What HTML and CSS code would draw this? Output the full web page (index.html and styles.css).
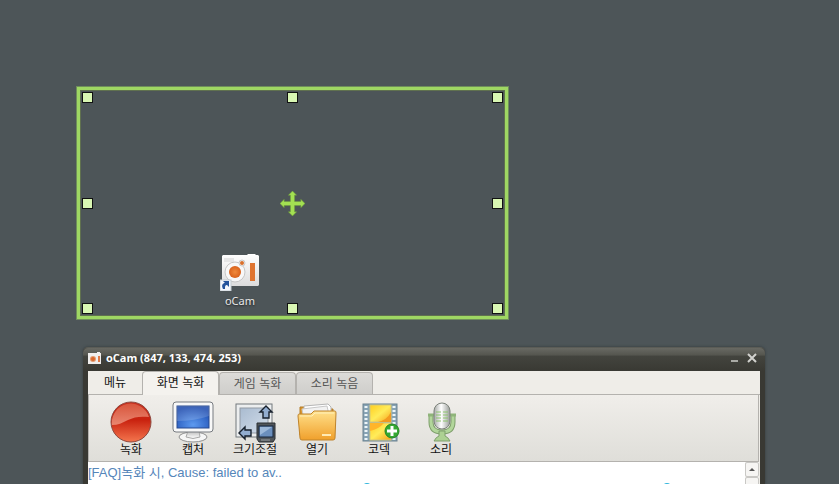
FILE: index.html
```html
<!DOCTYPE html>
<html lang="ko">
<head>
    <meta charset="UTF-8">
    <title>oCam</title>
    <meta name="viewport" content="width=device-width, initial-scale=1.0">
    <link rel="stylesheet" href="styles.css">
</head>
<body>
    <main class="desktop">
        <a class="shortcut" href="#ocam">
            <svg class="shortcut-icon" width="40" height="40" viewBox="0 0 40 40" aria-hidden="true">
                <defs>
                    <linearGradient id="camBody" x1="0" y1="0" x2="0" y2="1">
                        <stop offset="0" stop-color="#ffffff"/>
                        <stop offset="1" stop-color="#dcdcdc"/>
                    </linearGradient>
                    <radialGradient id="camLens">
                        <stop offset="0" stop-color="#f08a3c"/>
                        <stop offset="1" stop-color="#d9621c"/>
                    </radialGradient>
                </defs>
                <path d="M3 4h24l1-1h7l1 1h2l1 1v29l-1 1H3l-1-1V5z" fill="url(#camBody)"/>
                <rect x="4" y="7" width="10" height="4" fill="#e6e6e6"/>
                <circle cx="15" cy="21" r="10" fill="#f8f8f8" stroke="#c6c6c6"/>
                <circle cx="15" cy="21" r="6" fill="url(#camLens)"/>
                <circle cx="22" cy="12" r="3" fill="#f4f4f4" stroke="#cccccc"/>
                <circle cx="22" cy="12" r="2" fill="#d9702c"/>
                <rect x="30" y="12" width="5" height="18" fill="#df7430"/>
                <rect x="0" y="29" width="11" height="11" fill="#f4f8fc" stroke="#c4ccd2"/>
                <path d="M3 38c-2-4 0-6 2-6l-2-2h6v6l-2-2c-2 0-2 1-2 4z" fill="#24549c"/>
            </svg>
            <span>oCam</span>
        </a>

        <div class="region">
            <i class="handle"></i><i class="handle"></i><i class="handle"></i>
            <i class="handle"></i>
            <svg class="move" width="25" height="25" viewBox="0 0 24 24" aria-hidden="true">
                <path d="M12 0l4 4h-2v6h6V8l4 4-4 4v-2h-6v6h2l-4 4-4-4h2v-6H4v2l-4-4 4-4v2h6V4H8z" fill="#a3e052" stroke="#6d9a3c" stroke-width=".5"/>
            </svg>
            <i class="handle"></i>
            <i class="handle"></i><i class="handle"></i><i class="handle"></i>
        </div>

        <section class="window" id="ocam">
            <header class="titlebar">
                <svg width="13" height="12" viewBox="0 0 13 12" aria-hidden="true">
                    <path d="M0 1h9V0h3v1h1v11H0z" fill="#f0eeec"/>
                    <circle cx="5" cy="7" r="3" fill="#e49a70"/>
                    <circle cx="5" cy="7" r="2" fill="#d9682c"/>
                    <rect x="10" y="4" width="2" height="6" fill="#df7a48"/>
                </svg>
                <h1>oCam (847, 133, 474, 253)</h1>
                <button class="win-btn" aria-label="최소화">
                    <svg width="10" height="10" viewBox="0 0 10 10"><path d="M1 8h7" stroke="#a9aaa5" stroke-width="2"/></svg>
                </button>
                <button class="win-btn" aria-label="닫기">
                    <svg width="10" height="10" viewBox="0 0 10 10"><path d="M1 1l8 8M9 1L1 9" stroke="#d2d2ce" stroke-width="2"/></svg>
                </button>
            </header>

            <div class="client">
                <nav class="tabs">
                    <button class="menu">메뉴</button>
                    <button class="tab active">화면 녹화</button>
                    <button class="tab">게임 녹화</button>
                    <button class="tab">소리 녹음</button>
                </nav>

                <div class="toolbar">
                    <button class="tool">
                        <svg width="42" height="42" viewBox="0 0 42 42" aria-hidden="true">
                            <defs>
                                <linearGradient id="recBase" x1="0" y1="0" x2="0" y2="1">
                                    <stop offset="0" stop-color="#c83020"/>
                                    <stop offset=".45" stop-color="#c9220f"/>
                                    <stop offset="1" stop-color="#f4764e"/>
                                </linearGradient>
                                <linearGradient id="recShine" x1="0" y1="0" x2="0" y2="1">
                                    <stop offset="0" stop-color="#d8553c"/>
                                    <stop offset="1" stop-color="#e98670"/>
                                </linearGradient>
                            </defs>
                            <circle cx="21" cy="21" r="20" fill="url(#recBase)" stroke="#8e4a40"/>
                            <path d="M2 24a19 19 0 0 1 37-8c-9-1-15 0-21 3-6 3-10 5-16 5z" fill="url(#recShine)"/>
                        </svg>
                        <span>녹화</span>
                    </button>
                    <button class="tool">
                        <svg width="42" height="42" viewBox="0 0 42 42" aria-hidden="true">
                            <defs>
                                <radialGradient id="screen" cx=".5" cy=".85" r=".8">
                                    <stop offset="0" stop-color="#5d9af0"/>
                                    <stop offset="1" stop-color="#1746ac"/>
                                </radialGradient>
                                <linearGradient id="stand" x1="0" y1="0" x2="0" y2="1">
                                    <stop offset="0" stop-color="#b8b8b8"/>
                                    <stop offset="1" stop-color="#ffffff"/>
                                </linearGradient>
                            </defs>
                            <ellipse cx="21" cy="36" rx="14" ry="5" fill="#f6f6f6" stroke="#909090"/>
                            <path d="M16 30h11l1 6q-7 3-14 0z" fill="url(#stand)" stroke="#a8a8a8"/>
                            <rect x="1" y="1" width="40" height="30" rx="3" fill="#f8f8f8" stroke="#777b80"/>
                            <rect x="5" y="5" width="32" height="22" fill="url(#screen)" stroke="#284a90"/>
                            <path d="M5 5h32v10q-14 5-32 5z" fill="#ffffff" opacity=".16"/>
                        </svg>
                        <span>캡처</span>
                    </button>
                    <button class="tool">
                        <svg width="42" height="42" viewBox="0 0 42 42" aria-hidden="true">
                            <defs>
                                <linearGradient id="pane" x1="0" y1="0" x2="1" y2="1">
                                    <stop offset="0" stop-color="#a9bbd0"/>
                                    <stop offset="1" stop-color="#d3deeb"/>
                                </linearGradient>
                            </defs>
                            <rect x="2" y="3" width="36" height="33" fill="#eceeef" stroke="#73787d"/>
                            <rect x="6" y="7" width="28" height="25" fill="url(#pane)" stroke="#929aa4"/>
                            <path d="M32 5l6 6h-3v6h-6v-6h-3z" fill="#92add0" stroke="#17202c" stroke-width="1.4"/>
                            <path d="M5 32l6-6v3h6v6h-6v3z" fill="#92add0" stroke="#17202c" stroke-width="1.4"/>
                            <path d="M23 22h18v16l-2 3H25l-2-3z" fill="#51565a" stroke="#2b2f32"/>
                            <rect x="25" y="25" width="14" height="11" fill="#6b8fbd" stroke="#17243a"/>
                            <path d="M26 26h12l-12 8z" fill="#9cb8d9"/>
                            <path d="M27 39h9" stroke="#999da0"/>
                        </svg>
                        <span>크기조절</span>
                    </button>
                    <button class="tool">
                        <svg width="42" height="42" viewBox="0 0 42 42" aria-hidden="true">
                            <defs>
                                <linearGradient id="folder" x1="0" y1="0" x2="0" y2="1">
                                    <stop offset="0" stop-color="#ffe08a"/>
                                    <stop offset="1" stop-color="#f0a02c"/>
                                </linearGradient>
                            </defs>
                            <path d="M4 6h10l2 2h21v26H4z" fill="#dc962c" stroke="#b27a26"/>
                            <path d="M8 5l24-2 3 3v10H8z" fill="#ffffff" stroke="#b5b5b5"/>
                            <path d="M6 8l25-3 2 9H7z" fill="#f2f2f2" stroke="#c8c8c8"/>
                            <path d="M3 13h12l3-3h21q1 0 1 2l-1 25q0 2-2 2H6q-2 0-2-2L2 15q0-2 1-2z" fill="url(#folder)" stroke="#bf842c"/>
                            <path d="M4 15h12l3-3h19" fill="none" stroke="#fff0ba"/>
                            <path d="M26 34h9" stroke="#ffeab4" stroke-width="2"/>
                        </svg>
                        <span>열기</span>
                    </button>
                    <button class="tool">
                        <svg width="42" height="42" viewBox="0 0 42 42" aria-hidden="true">
                            <defs>
                                <linearGradient id="frame" x1="0" y1="0" x2="1" y2="1">
                                    <stop offset="0" stop-color="#ffce1f"/>
                                    <stop offset=".5" stop-color="#ffec5a"/>
                                    <stop offset="1" stop-color="#f6a11a"/>
                                </linearGradient>
                            </defs>
                            <rect x="5" y="3" width="34" height="37" fill="#87a3b4" stroke="#6b8290"/>
                            <path d="M8 5v34M36 5v34" stroke="#edf5f8" stroke-width="3" stroke-dasharray="2 2"/>
                            <rect x="12" y="4" width="21" height="17" fill="url(#frame)" stroke="#d5c77a"/>
                            <rect x="12" y="22" width="21" height="17" fill="url(#frame)" stroke="#d5c77a"/>
                            <path d="M33 11v10H20q9-2 13-10z" fill="#f39a20"/>
                            <path d="M12 22h14q-5 6-14 8z" fill="#ffb52a"/>
                            <circle cx="34" cy="30" r="7" fill="#35a832" stroke="#238723"/>
                            <path d="M34 25v10M29 30h10" stroke="#ffffff" stroke-width="3"/>
                        </svg>
                        <span>코덱</span>
                    </button>
                    <button class="tool">
                        <svg width="42" height="42" viewBox="0 0 42 42" aria-hidden="true">
                            <defs>
                                <linearGradient id="mic" x1="0" y1="0" x2="1" y2="0">
                                    <stop offset="0" stop-color="#a5a8a5"/>
                                    <stop offset=".45" stop-color="#ffffff"/>
                                    <stop offset="1" stop-color="#999d99"/>
                                </linearGradient>
                            </defs>
                            <path d="M11 14v7q0 10 11 10t11-10v-7" fill="none" stroke="#7f9f6c" stroke-width="5"/>
                            <path d="M11 14v7q0 10 11 10t11-10v-7" fill="none" stroke="#b2d69b" stroke-width="3"/>
                            <path d="M8 14h6M30 14h6" stroke="#8fb47a" stroke-width="3"/>
                            <path d="M19 30h6v5q3 1 5 5H14q2-4 5-5z" fill="#add192" stroke="#7f9f6c"/>
                            <rect x="14" y="2" width="16" height="26" rx="8" fill="url(#mic)" stroke="#7c827a"/>
                            <path d="M16 11h5M23 11h5M16 14h5M23 14h5M16 17h5M23 17h5M16 20h5M23 20h5" stroke="#8cc36c"/>
                        </svg>
                        <span>소리</span>
                    </button>
                </div>

                <div class="news">
                    <div class="news-list">
                        <a href="#faq">[FAQ]녹화 시, Cause: failed to av..</a>
                        <div class="dots"><i></i><i></i></div>
                    </div>
                    <div class="scrollbar">
                        <button class="scroll-up" aria-label="위로">
                            <svg width="6" height="3" viewBox="0 0 6 3"><path d="M0 3l3-3 3 3z" fill="#555"/></svg>
                        </button>
                        <div class="thumb"></div>
                    </div>
                </div>
            </div>
        </section>
    </main>
</body>
</html>
```
FILE: styles.css
```css
* {
    box-sizing: border-box;
}
body {
    margin: 0;
    font-family: "Liberation Sans", "Noto Sans CJK KR", sans-serif;
    font-size: 12px;
    color: #111;
}
button {
    margin: 0;
    padding: 0;
    border: none;
    background: none;
    color: inherit;
    font: inherit;
    cursor: pointer;
}
svg {
    display: block;
}
.desktop {
    position: relative;
    height: 100vh;
    overflow: hidden;
    background: #4d5558;
}

/* desktop icon */
.shortcut {
    position: absolute;
    left: 210px;
    top: 251px;
    width: 60px;
    display: flex;
    flex-direction: column;
    align-items: center;
    gap: 2px;
    color: #e8e8e8;
    font-family: "Noto Sans", sans-serif;
    font-size: 11px;
    line-height: 16px;
    text-decoration: none;
    text-shadow: 0 1px 2px #222;
}

/* recording area */
.region {
    position: absolute;
    left: 76px;
    top: 86px;
    width: 433px;
    height: 234px;
    padding: 2px;
    border: 4px solid #9fd763;
    outline: 1px solid #6f8e5b;
    outline-offset: -1px;
    box-shadow: inset 0 0 0 1px #60714f;
    display: grid;
    grid-template-columns: repeat(3, 25px);
    grid-template-rows: 11px 25px 11px;
    justify-content: space-between;
    align-content: space-between;
    align-items: center;
    justify-items: center;
}
.handle {
    width: 11px;
    height: 11px;
    background: #d9f7b3;
    border: 1px solid #111;
}
.handle:nth-child(3n+1) {
    justify-self: start;
}
.handle:nth-child(3n) {
    justify-self: end;
}

/* main window */
.window {
    position: absolute;
    left: 83px;
    right: 74px;
    top: 347px;
    bottom: 0;
    padding: 0 5px;
    display: flex;
    flex-direction: column;
    background: #393933;
    border: 1px solid #5b5c56;
    border-width: 1px 0 0;
    border-radius: 5px 5px 0 0;
    box-shadow: 0 0 3px #33393b;
}
.titlebar {
    display: flex;
    align-items: center;
    gap: 5px;
    height: 23px;
    margin: 0 -5px;
    padding: 0 7px 3px 5px;
    border-radius: 5px 5px 0 0;
    background: linear-gradient(#686963, #55564f 30%, #43443e 36%, #393933);
}
.titlebar h1 {
    flex: 1;
    margin: 0;
    color: #fff;
    font: bold 11px/16px "Open Sans", "Noto Sans", sans-serif;
}
.win-btn {
    padding: 0 1px;
}
.client {
    flex: 1;
    min-height: 0;
    display: flex;
    flex-direction: column;
    background: #efede8;
}

.tabs {
    display: flex;
    align-items: flex-end;
    height: 24px;
    flex-shrink: 0;
    border-bottom: 1px solid #b4b2ae;
}
.menu {
    width: 54px;
    height: 23px;
    padding-bottom: 2px;
}
.tab {
    width: 77px;
    height: 22px;
    padding-bottom: 2px;
    border: 1px solid #b4b2ae;
    border-bottom: none;
    border-radius: 4px 4px 0 0;
    background: linear-gradient(#dcdbd8, #cfcecb);
    color: #555;
}
.tab.active {
    height: 24px;
    margin-bottom: -1px;
    padding-bottom: 4px;
    background: #f4f2ee;
    color: #111;
}

.toolbar {
    display: flex;
    height: 67px;
    flex-shrink: 0;
    margin-right: 1px;
    padding: 6px 11px 0;
    border: 1px solid #b4b2ae;
    border-top: none;
    background: linear-gradient(#f0eeea, #dfded9);
}
.tool {
    width: 62px;
    display: flex;
    flex-direction: column;
    align-items: center;
    line-height: 14px;
}

.news {
    flex: 1;
    min-height: 0;
    display: flex;
    margin-right: 1px;
    background: #fff;
    overflow: hidden;
}
.news-list {
    flex: 1;
}
.news-list a {
    display: block;
    color: #5586ba;
    font-size: 13px;
    line-height: 21px;
    text-decoration: none;
}
.dots {
    display: flex;
    justify-content: space-between;
    padding: 0 73px 0 274px;
}
.dots i {
    width: 10px;
    height: 10px;
    border: 2px solid #2fb4dc;
    border-radius: 50%;
}
.scrollbar {
    width: 14px;
    background: #eeedeb;
}
.scroll-up,
.thumb {
    display: flex;
    align-items: center;
    justify-content: center;
    width: 14px;
    height: 15px;
    border: 1px solid #c9c8c5;
    border-radius: 2px;
    background: #f6f5f3;
}
.thumb {
    height: 30px;
}
```
